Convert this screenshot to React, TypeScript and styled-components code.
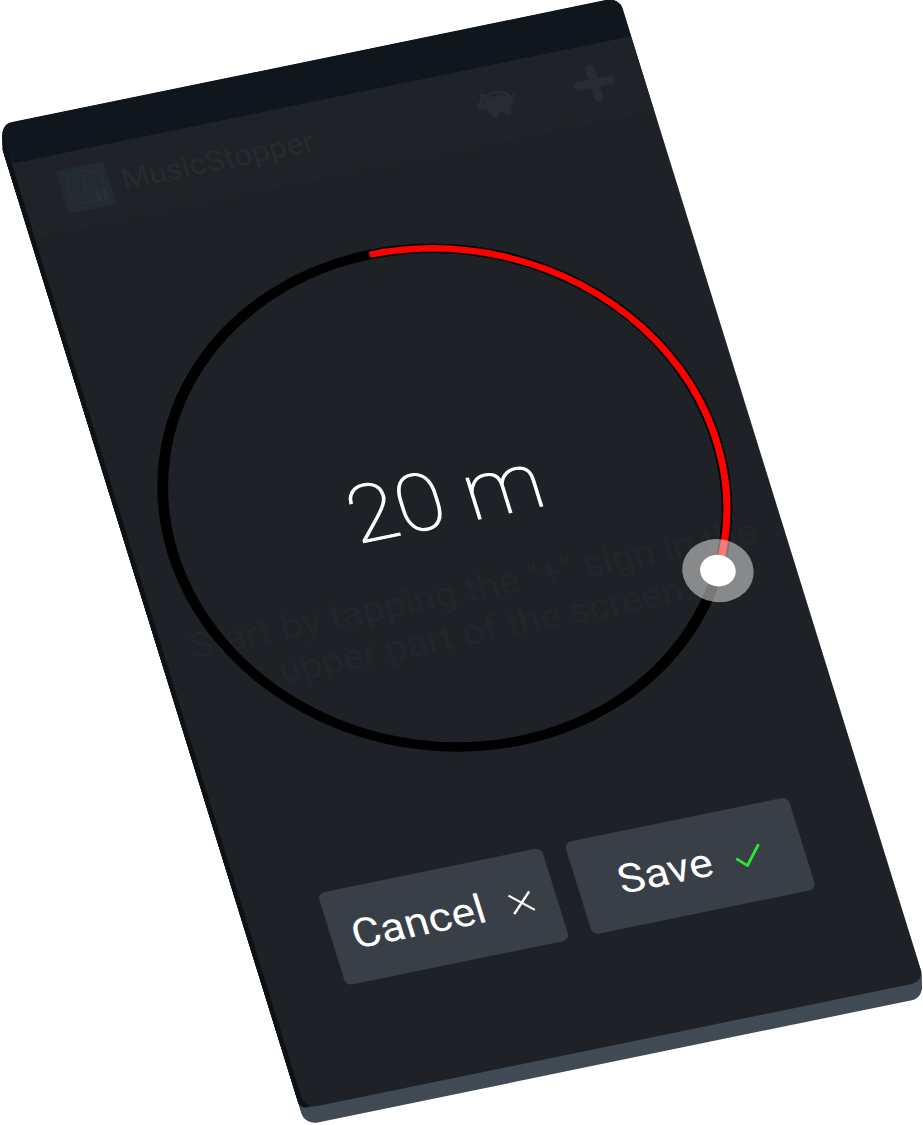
import React, { useState } from "react";
import styled, { createGlobalStyle } from "styled-components";

const GlobalStyle = createGlobalStyle`
  *, *::before, *::after { box-sizing: border-box; }
  body {
    margin: 0;
    background: #ffffff;
    font-family: Roboto, "Liberation Sans", sans-serif;
  }
`;

/* Thickness of the slab, drawn as one shadow per pixel of depth. */
const extrude = (color: string) =>
  Array.from({ length: 15 }, (_, i) => {
    const depth = i + 1;
    return `${-Math.round((depth * 4) / 15)}px ${depth}px 0 ${color}`;
  }).join(", ");

const Stage = styled.main`
  display: flex;
  align-items: center;
  justify-content: center;
  min-height: 100vh;
  padding-bottom: 20px;
  overflow: hidden;
`;

const Device = styled.div`
  position: relative;
  flex: none;
  width: 100%;
  max-width: 540px;
  border-radius: 11px;
  transform: matrix(1.147, -0.236, 0.318, 1.025, 0, 0);
  box-shadow: ${extrude("#414b55")};

  &::before {
    content: "";
    position: absolute;
    z-index: -1;
    top: 0;
    bottom: 16px;
    left: 0;
    width: 12px;
    border-radius: 11px 0 0 6px;
    box-shadow: ${extrude("#0f1315")};
  }
`;

const Screen = styled.div`
  position: relative;
  display: flex;
  flex-direction: column;
  min-height: 960px;
  border-radius: 11px;
  overflow: hidden;
  background: #1e2125;
`;

const StatusBar = styled.div`
  height: 38px;
  background: #0f161d;
`;

const Header = styled.header`
  display: flex;
  align-items: center;
  height: 71px;
  padding: 2px 24px 0 34px;
  border-bottom: 2px solid #212529;
  background: #1f2226;
`;

const Title = styled.h1`
  margin: 0 auto 0 10px;
  color: #272b30;
  font-size: 27px;
  font-weight: 400;
  line-height: 32px;
`;

const IconButton = styled.button`
  display: flex;
  align-items: center;
  justify-content: center;
  margin: 0 0 0 48px;
  padding: 0;
  border: 0;
  background: none;
  color: #282c32;
`;

const HintArea = styled.section`
  display: flex;
  flex: 1;
  align-items: center;
  justify-content: center;
`;

const Hint = styled.p`
  margin: 0;
  color: #22262b;
  font-size: 33px;
  line-height: 40px;
  text-align: center;
`;

const Overlay = styled.form`
  position: absolute;
  inset: 0;
  display: flex;
  flex-direction: column;
  align-items: center;
  gap: 98px;
  padding-top: 185px;
`;

const Dial = styled.div`
  display: grid;
  place-items: center;
  width: 482px;
  height: 482px;

  > * { grid-area: 1 / 1; }
`;

const DialArt = styled.svg`
  display: block;
  width: 100%;
  height: 100%;
  overflow: visible;
`;

const DialInput = styled.input`
  width: 100%;
  height: 100%;
  margin: 0;
  opacity: 0;
`;

const Time = styled.output`
  color: #ffffff;
  font-size: 75px;
  font-weight: 100;
  line-height: 88px;
  -webkit-text-stroke: 1px #ffffff;
  pointer-events: none;
`;

const Actions = styled.div`
  display: flex;
  gap: 20px;
`;

const ActionButton = styled.button`
  display: flex;
  align-items: center;
  justify-content: center;
  gap: 20px;
  width: 195px;
  height: 90px;
  padding: 0;
  border: 0;
  border-radius: 6px;
  background: #393f47;
  color: #ffffff;
  font-family: inherit;
  font-size: 38px;
  line-height: 44px;
`;

const Logo = () => (
  <svg width="42" height="42" viewBox="0 0 42 42" aria-hidden="true">
    <rect width="42" height="42" fill="#232b32" />
    <g fill="none" stroke="#282e33" strokeWidth="2">
      <path d="M36.500 20A15.500 15.500 0 1 0 25 35" />
      <path d="M21 9v12l-6 7" />
    </g>
    <path d="M27 25h4v11h-4zM33 25h4v11h-4z" fill="#2b3033" />
  </svg>
);

const Piggy = () => (
  <svg width="38" height="28" viewBox="0 0 38 28" aria-hidden="true">
    <path
      fill="currentColor"
      fillRule="evenodd"
      d="M7.3 1.6c2 .4 3.8 1.600 5 3.200 5-2.600 11.600-2.700 16.200.2 2.700 1.700 4.300 4.300 4.500 7.200 1.500.1 2-.6 1.300-1.700-1-1.600.2-3.600 1.900-3l-.2 1c-.8-.2-1.100.5-.6 1.300 1.200 1.900.1 3.700-2.300 3.700-.2 2.600-1.500 4.900-3.800 6.500l-.4 5.200c0 1-.6 1.500-1.500 1.500h-3c-.9 0-1.400-.5-1.500-1.400l-.2-2h-4.300l-.4 2c-.2.9-.7 1.400-1.600 1.400h-3c-.9 0-1.500-.6-1.600-1.500l-.6-4.500c-1.300-.8-2.400-1.800-3.200-3L3 17.300c-.9-.1-1.400-.6-1.500-1.500l-.3-3.500c0-.9.4-1.400 1.200-1.600l2.700-.7c.4-1.300 1-2.400 1.900-3.400zM9 8.600a1.200 1.200 0 1 0 0 2.400 1.200 1.200 0 0 0 0-2.400z"
    />
    <path
      d="M14.500 6.800c4.500-2 9.800-1.200 13.200 2.200"
      fill="none"
      stroke="#1f2226"
      strokeWidth="1.800"
    />
  </svg>
);

const Plus = () => (
  <svg width="36" height="36" viewBox="0 0 36 36" aria-hidden="true">
    <path
      d="M18 4v28M4 18h28"
      stroke="currentColor"
      strokeWidth="8"
      strokeLinecap="round"
    />
  </svg>
);

const Cross = () => (
  <svg width="24" height="24" viewBox="0 0 24 24" aria-hidden="true">
    <path d="M3 5l18 18M21 5L3 23" stroke="#ffffff" strokeWidth="2" />
  </svg>
);

const Tick = () => (
  <svg width="24" height="24" viewBox="0 0 24 24" aria-hidden="true">
    <path d="M1 14l7.500 8.500L23 5" fill="none" stroke="#2ee62e" strokeWidth="2.400" />
  </svg>
);

const RADIUS = 237;
const CENTER = 241;

const pointAt = (minutes: number) => {
  const angle = (minutes / 60) * 2 * Math.PI;
  return {
    x: CENTER + RADIUS * Math.sin(angle),
    y: CENTER - RADIUS * Math.cos(angle),
  };
};

export default function App() {
  const [minutes, setMinutes] = useState(20);
  const end = pointAt(minutes);
  const arc = `M${CENTER} ${CENTER - RADIUS}A${RADIUS} ${RADIUS} 0 ${
    minutes > 30 ? 1 : 0
  } 1 ${end.x} ${end.y}`;

  return (
    <>
      <GlobalStyle />
      <Stage>
        <Device>
          <Screen>
            <StatusBar />
            <Header>
              <Logo />
              <Title>MusicStopper</Title>
              <IconButton type="button" aria-label="Donate">
                <Piggy />
              </IconButton>
              <IconButton type="button" aria-label="Add timer">
                <Plus />
              </IconButton>
            </Header>
            <HintArea>
              <Hint>
                Start by tapping the "+" sign in the
                <br />
                upper part of the screen.
              </Hint>
            </HintArea>
            <Overlay onSubmit={(event) => event.preventDefault()}>
              <Dial>
                <DialArt viewBox="0 0 482 482" aria-hidden="true">
                  <circle
                    cx={CENTER}
                    cy={CENTER}
                    r={RADIUS}
                    fill="none"
                    stroke="#000000"
                    strokeWidth="9"
                  />
                  <path d={arc} fill="none" stroke="#ff0000" strokeWidth="6" />
                  <circle cx={end.x} cy={end.y} r="30" fill="#ffffff" fillOpacity="0.47" />
                  <circle cx={end.x} cy={end.y} r="15" fill="#ffffff" />
                </DialArt>
                <Time htmlFor="minutes">{minutes} m</Time>
                <DialInput
                  id="minutes"
                  type="range"
                  min="1"
                  max="59"
                  value={minutes}
                  aria-label="Minutes"
                  onChange={(event) => setMinutes(Number(event.target.value))}
                />
              </Dial>
              <Actions>
                <ActionButton type="button">
                  Cancel
                  <Cross />
                </ActionButton>
                <ActionButton type="submit">
                  Save
                  <Tick />
                </ActionButton>
              </Actions>
            </Overlay>
          </Screen>
        </Device>
      </Stage>
    </>
  );
}
